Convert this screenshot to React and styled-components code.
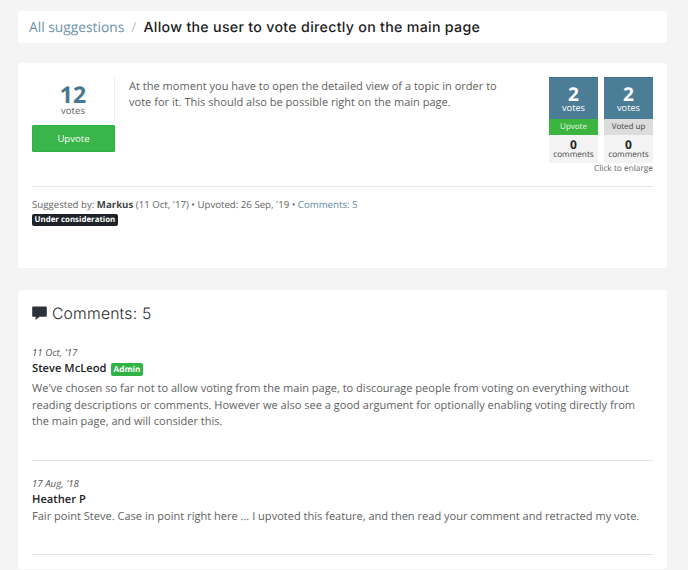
import React from "react";
import styled, { createGlobalStyle } from "styled-components";

const Global = createGlobalStyle`
  html, body { margin: 0; padding: 0; background: #f4f4f4; height: 570px; overflow: hidden; }
  body { font-family: "Open Sans", "Liberation Sans", sans-serif; color: #555; text-rendering: geometricPrecision; }
`;
const Page = styled.div`
  display: flex; flex-direction: column; padding: 11px 21px 0 18px; height: 559px; overflow: hidden;
`;
const Card = styled.section`
  background: #fff; border-radius: 3px; padding: 14px; flex: none;
`;
const Crumbs = styled(Card)`
  display: flex; align-items: center; height: 32px; padding: 0 11px; box-sizing: border-box; margin-bottom: 20px;
  font-family: Inter, "Liberation Sans", sans-serif;
`;
const CrumbLink = styled.a`
  font-family: "Open Sans", sans-serif; font-size: 13.8px; color: #6b93a8;
`;
const Sep = styled.span`
  font-family: "Open Sans", sans-serif; font-size: 14px; color: #c4c4c4; margin: 0 7px;
`;
const Title = styled.h1`
  margin: 0; font-size: 14.2px; font-weight: 500; color: #1c1c1c; letter-spacing: .3px;
`;
const TopCard = styled(Card)`
  height: 205px; box-sizing: border-box; margin-bottom: 22px;
`;
const TopRow = styled.div`display: flex; height: 109px;`;
const VoteCol = styled.div`width: 83px; flex: none; margin-right: 14px;`;
const VoteBox = styled.div`
  height: 44px; box-sizing: border-box; border-right: 1px solid #ececec; display: flex; flex-direction: column; align-items: center; padding-top: 6px; margin-bottom: 4px; width: 83px;
`;
const VoteNum = styled.div`font-size: 23px; font-weight: 700; color: #457890; line-height: 22px;`;
const VoteLabel = styled.div`font-size: 9.6px; color: #666; line-height: 9px; margin-top: 1px;`;
const UpBtn = styled.button`
  display: block; width: 83px; height: 27px; box-sizing: border-box; background: #39b54a; border: 1px solid #2fb344; border-radius: 1px; color: #fff; font: 9.6px "Open Sans", sans-serif; padding: 0;
`;
const Desc = styled.p`
  margin: 0; width: 372px; flex: none; font-size: 11.05px; line-height: 16.4px; color: #636363; padding-top: 2px;
`;
const ThumbWrap = styled.div`display: flex; flex-direction: column; align-items: flex-end; flex: none; margin-left: auto;`;
const Thumbs = styled.div`display: flex; gap: 6px;`;
const Thumb = styled.div`width: 49px; display: flex; flex-direction: column; align-items: stretch; text-align: center;`;
const ThumbTop = styled.div`
  background: #4c7d96; color: #fff; height: 42px; box-sizing: border-box; padding-top: 6px; display: flex; flex-direction: column; align-items: center; border-top: 1px solid #3f6f88;
`;
const ThumbNum = styled.div`font-size: 19px; font-weight: 700; line-height: 20px;`;
const ThumbLabel = styled.div`font-size: 9.2px; line-height: 8px;`;
const ThumbAction = styled.div`
  height: 16px; font-size: 8px; line-height: 16px; background: ${p => p.$voted ? "#dcdcdc" : "#3bb53f"}; color: ${p => p.$voted ? "#444" : "#e8f8e8"};
`;
const ThumbBottom = styled.div`
  height: 28px; background: #f3f3f3; display: flex; flex-direction: column; align-items: center; padding-top: 4px; box-sizing: border-box;
`;
const CommentNum = styled.div`font-size: 12px; font-weight: 700; color: #222; line-height: 12px;`;
const CommentLabel = styled.div`font-size: 8.2px; color: #444; line-height: 8px;`;
const Enlarge = styled.div`font-size: 8.3px; color: #666; line-height: 12px;`;
const Rule = styled.hr`border: 0; height: 1px; background: #e8e8e8; margin: 0;`;
const Meta = styled.div`font-size: 9.67px; color: #666; line-height: 14px; margin-top: 11px; strong { font-weight: 700; color: #444; }`;
const MetaLink = styled.a`color: #5f8ba3;`;
const StatusBadge = styled.span`
  display: block; width: max-content; background: #1e2229; color: #fff; font-size: 7.9px; font-weight: 700; line-height: 12px; height: 12px; padding: 0 2.5px; border-radius: 2px; margin-top: 2px;
`;
const Heading = styled.h2`
  margin: 0; display: flex; align-items: center; gap: 5px; font-family: Inter, "Liberation Sans", sans-serif; font-weight: 300; font-size: 15.7px; color: #2a2a2a; height: 18px; letter-spacing: .2px;
`;
const Comment = styled.article`
  padding-top: ${p => p.$first ? "24px" : "16px"}; padding-bottom: 29px; border-bottom: 1px solid #e6e6e6;
`;
const Date = styled.div`font-size: 9.7px; font-style: italic; color: #555; line-height: 14px;`;
const Author = styled.div`
  display: flex; align-items: center; gap: 4px; font-size: 11.2px; font-weight: 600; color: #222; line-height: 18px; margin-bottom: ${p => p.$badge ? "3px" : "0"};
`;
const AdminBadge = styled.span`
  background: #2fb344; color: #fff; font-size: 8.2px; font-weight: 700; line-height: 13px; height: 13px; padding: 0 3px; border-radius: 2px;
`;
const Body = styled.p`margin: 0; font-size: 11.05px; line-height: 16.5px; color: #636363;`;

const Bubble = () => (
  <svg width="15" height="15" viewBox="0 0 15 15" aria-hidden="true">
    <path d="M1 0.5h13a.8.8 0 0 1 .8.8v8.6a.8.8 0 0 1-.8.8H7.5L3.6 14v-3.3H1a.8.8 0 0 1-.8-.8V1.3A.8.8 0 0 1 1 .5z" fill="#2c313a" />
  </svg>
);

const ThumbCard = ({ action, voted }) => (
  <Thumb>
    <ThumbTop><ThumbNum>2</ThumbNum><ThumbLabel>votes</ThumbLabel></ThumbTop>
    <ThumbAction $voted={voted}>{action}</ThumbAction>
    <ThumbBottom><CommentNum>0</CommentNum><CommentLabel>comments</CommentLabel></ThumbBottom>
  </Thumb>
);

export default function App() {
  return (
    <Page>
      <Global />
      <Crumbs>
        <CrumbLink>All suggestions</CrumbLink><Sep>/</Sep>
        <Title>Allow the user to vote directly on the main page</Title>
      </Crumbs>
      <TopCard>
        <TopRow>
          <VoteCol>
            <VoteBox><VoteNum>12</VoteNum><VoteLabel>votes</VoteLabel></VoteBox>
            <UpBtn>Upvote</UpBtn>
          </VoteCol>
          <Desc>At the moment you have to open the detailed view of a topic in order to vote for it. This should also be possible right on the main page.</Desc>
          <ThumbWrap>
            <Thumbs>
              <ThumbCard action="Upvote" />
              <ThumbCard action="Voted up" voted />
            </Thumbs>
            <Enlarge>Click to enlarge</Enlarge>
          </ThumbWrap>
        </TopRow>
        <Rule />
        <Meta>Suggested by: <strong>Markus</strong> (11 Oct, '17) • Upvoted: 26 Sep, '19 • <MetaLink>Comments: 5</MetaLink></Meta>
        <StatusBadge>Under consideration</StatusBadge>
      </TopCard>
      <Card>
        <Heading><Bubble />Comments: 5</Heading>
        <Comment $first>
          <Date>11 Oct, '17</Date>
          <Author $badge>Steve McLeod <AdminBadge>Admin</AdminBadge></Author>
          <Body>We've chosen so far not to allow voting from the main page, to discourage people from voting on everything without reading descriptions or comments. However we also see a good argument for optionally enabling voting directly from the main page, and will consider this.</Body>
        </Comment>
        <Comment>
          <Date>17 Aug, '18</Date>
          <Author>Heather P</Author>
          <Body>Fair point Steve. Case in point right here ... I upvoted this feature, and then read your comment and retracted my vote.</Body>
        </Comment>
      </Card>
    </Page>
  );
}
